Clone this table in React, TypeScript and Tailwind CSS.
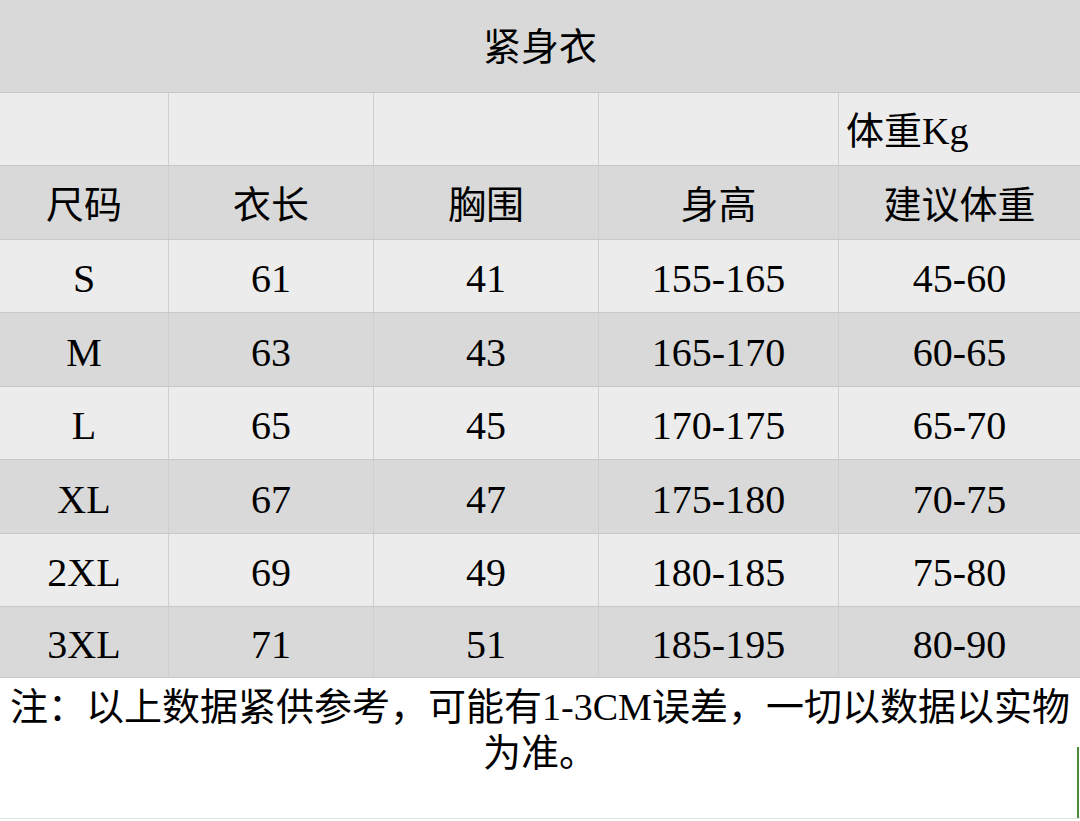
import React from "react";

const font = { fontFamily: '"Liberation Serif", "Noto Sans CJK SC", serif' };

const rows = [
  ["S", "61", "41", "155-165", "45-60"],
  ["M", "63", "43", "165-170", "60-65"],
  ["L", "65", "45", "170-175", "65-70"],
  ["XL", "67", "47", "175-180", "70-75"],
  ["2XL", "69", "49", "180-185", "75-80"],
  ["3XL", "71", "51", "185-195", "80-90"],
];

const heights = ["h-[73px]", "h-[74px]", "h-[73px]", "h-[74px]", "h-[73px]", "h-[71px]"];

function Row({
  cells,
  dark,
  h,
  firstLeft,
  latin,
}: {
  cells: string[];
  dark: boolean;
  h: string;
  firstLeft?: boolean;
  latin?: boolean;
}) {
  return (
    <div
      className={`grid grid-cols-[169px_205px_225px_240px_1fr] border-b border-[#c8c8c8] ${h} ${
        dark ? "bg-[#d9d9d9]" : "bg-[#ececec]"
      }`}
    >
      {cells.map((c, i) => (
        <div
          key={i}
          className={`flex items-center ${firstLeft && i === 4 ? "justify-start pl-[7px]" : "justify-center"} ${
            i < 4 ? "border-r border-[#cfcfcf]" : ""
          } ${latin ? "text-[40px] pt-[6px]" : "text-[38px] pt-[4px]"} leading-none text-black`}
        >
          {c}
        </div>
      ))}
    </div>
  );
}

export default function App() {
  return (
    <div className="relative w-[1080px] h-[821px] bg-white overflow-hidden" style={font}>
      <div className="h-[93px] bg-[#d9d9d9] border-b border-[#c8c8c8] flex items-center justify-center text-[38px] leading-none text-black pt-[2px]">
        紧身衣
      </div>
      <Row cells={["", "", "", "", "体重Kg"]} dark={false} h="h-[73px]" firstLeft />
      <Row cells={["尺码", "衣长", "胸围", "身高", "建议体重"]} dark={true} h="h-[74px]" />
      {rows.map((r, i) => (
        <Row key={i} cells={r} dark={i % 2 === 1} h={heights[i]} latin />
      ))}
      <div className="h-[141px] bg-white border-b border-[#e0e0e0] pt-[6px] text-center text-[38px] leading-[46px] text-black">
        <div className="whitespace-nowrap">注：以上数据紧供参考，可能有1-3CM误差，一切以数据以实物</div>
        <div>为准。</div>
      </div>
      <div className="absolute right-[1px] top-[747px] w-[2px] h-[71px] bg-[#4b8a3b]" />
    </div>
  );
}
